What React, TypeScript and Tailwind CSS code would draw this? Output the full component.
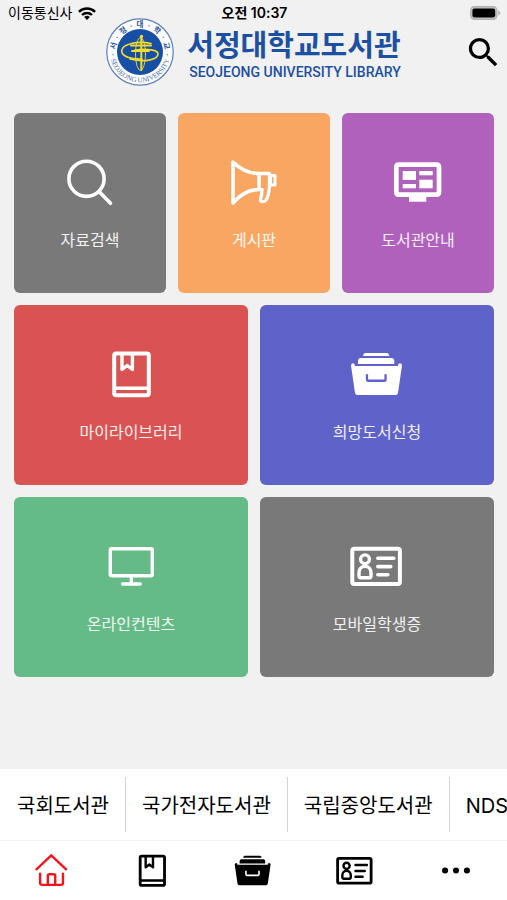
import type { ReactNode } from "react";
import { MdSearch } from "react-icons/md";

type IconProps = { className?: string };

function Icon({ className, children }: IconProps & { children: ReactNode }) {
  return (
    <svg
      viewBox="0 0 54 52"
      fill="none"
      stroke="currentColor"
      strokeWidth="3.6"
      strokeLinecap="round"
      strokeLinejoin="round"
      aria-hidden="true"
      className={className}
    >
      {children}
    </svg>
  );
}

function SearchIcon({ className }: IconProps) {
  return (
    <Icon className={className}>
      <circle cx="23.5" cy="22.8" r="17.6" />
      <path d="M36.5 36 L47.5 47.3" />
    </Icon>
  );
}

function MegaphoneIcon({ className }: IconProps) {
  return (
    <Icon className={className}>
      <path d="M6 6 C13 13 22 17.5 32 17.5 V33.5 C22 33.5 13 39 6 47 Z" />
      <path d="M32 17.5 H42.5 V30 C42 37 41 41 39 44 C37.5 46.5 33 46 33.5 43.5 C34.5 40 35 37 35 33.5 H32" strokeWidth="3.3" />
      <path d="M43.5 19.5 H48 V29 H43.5 Z" strokeWidth="3" />
    </Icon>
  );
}

function GuideIcon({ className }: IconProps) {
  return (
    <Icon className={className}>
      <rect x="5.3" y="8.6" width="42.7" height="30" rx="2" strokeWidth="4.7" />
      <g fill="currentColor" stroke="none">
        <path d="M18 40h17.3v5.7H18z" />
        <path d="M11.7 15H25v9H11.7z" />
        <path d="M11.7 28H25v4.3H11.7z" />
        <path d="M28.3 15h13.4v4.3H28.3z" />
        <path d="M28.3 23.7h13.4v8.6H28.3z" />
      </g>
    </Icon>
  );
}

function BookIcon({ className }: IconProps) {
  return (
    <Icon className={className}>
      <rect x="10.2" y="5.5" width="34.6" height="41.7" rx="2" strokeWidth="4" />
      <path d="M11 40.3 H44" strokeWidth="3.4" />
      <path d="M18 6 V21.5 L23.2 17.5 L28.4 21.5 V6" strokeWidth="3.4" />
    </Icon>
  );
}

function BasketIcon({ className }: IconProps) {
  return (
    <Icon className={className}>
      <g fill="currentColor" stroke="none">
        <path d="M15 5 H37.3 Q39 5.3 39.3 8 H13 Q13.3 5.3 15 5 Z" />
        <path d="M10.3 10 H42 Q44 10.2 44.3 12.5 V16 H8 V12.5 Q8.3 10.2 10.3 10 Z" />
        <path
          fillRule="evenodd"
          d="M1 17.5 Q1.2 15.3 3.2 15.3 Q4.8 15.3 4.9 18 H47.9 Q48 15.3 49.8 15.3 Q52 15.3 52 17.5 L48 45 Q47.6 47 45.7 47 H7.3 Q5.5 47 5 45 Z M15.8 26.3 V31.5 Q15.8 34 18.2 34 H34.2 Q36.7 34 36.7 31.5 V26.3 H34.4 V31.6 H18.1 V26.3 Z"
        />
      </g>
    </Icon>
  );
}

function MonitorIcon({ className }: IconProps) {
  return (
    <Icon className={className}>
      <rect x="6.3" y="8.7" width="42" height="27" rx="1.5" strokeWidth="3.4" />
      <path d="M27.3 36 V44 M18.5 44 H36.3" strokeWidth="3.4" />
    </Icon>
  );
}

function IdCardIcon({ className }: IconProps) {
  return (
    <Icon className={className}>
      <rect x="2.3" y="8.7" width="47.6" height="35.2" rx="2" strokeWidth="4" />
      <circle cx="15" cy="19.3" r="4.4" strokeWidth="3.4" />
      <path
        d="M15 26.3 C11 26.3 9 29.5 9 33 V36 Q9 37.7 10.7 37.7 H19.4 Q21 37.7 21 36 V33 C21 29.5 19 26.3 15 26.3 Z"
        strokeWidth="3.4"
      />
      <path d="M27.8 18.3 H43.8 M27.8 26.6 H40.8 M27.8 34.8 H37.8" strokeWidth="3.6" />
    </Icon>
  );
}

function HomeIcon({ className }: IconProps) {
  return (
    <Icon className={className}>
      <path d="M6.3 24.3 L27.4 4.5 L48.5 24.3" strokeWidth="3.4" />
      <path d="M11.5 30.5 V43.5 Q11.5 46.5 14.5 46.5 H41 Q44 46.5 44 43.5 V30.5" strokeWidth="3.4" />
      <path d="M22.5 46 V33.5 Q22.5 31.3 24.7 31.3 H30.8 Q33 31.3 33 33.5 V46" strokeWidth="3.4" />
    </Icon>
  );
}

function MoreIcon({ className }: IconProps) {
  return (
    <Icon className={className}>
      <g fill="currentColor" stroke="none">
        <circle cx="11.5" cy="26" r="4.3" />
        <circle cx="27" cy="26" r="4.3" />
        <circle cx="42.5" cy="26" r="4.3" />
      </g>
    </Icon>
  );
}

function WifiIcon() {
  return (
    <svg viewBox="0 0 18 13" className="h-[13px] w-[18px]" aria-hidden="true">
      <g fill="none" stroke="#000" strokeWidth="2.4">
        <path d="M0.9 4.8 A11.6 11.6 0 0 1 17.1 4.8" />
        <path d="M4 8 A7.2 7.2 0 0 1 14 8" />
      </g>
      <path d="M9 13 L6.2 10.1 A4 4 0 0 1 11.8 10.1 Z" />
    </svg>
  );
}

function BatteryIcon() {
  return (
    <svg viewBox="0 0 31 14" className="h-[14px] w-[31px]" aria-hidden="true">
      <rect x="0.8" y="0.8" width="26" height="12.4" rx="3.6" fill="#c9c9c9" stroke="#b0b0b0" strokeWidth="1.4" />
      <rect x="2.4" y="2.4" width="22.8" height="9.2" rx="2" />
      <path d="M28.3 4.6 Q30.4 5.4 30.4 7 Q30.4 8.6 28.3 9.4 Z" fill="#b0b0b0" />
    </svg>
  );
}

function Emblem() {
  return (
    <svg viewBox="0 0 68 68" className="size-[68px]" role="img" aria-label="서정대학교">
      <defs>
        <path id="ring-top" d="M9.5 37 A24.7 24.7 0 1 1 58.5 37" />
        <path id="ring-bottom" d="M3.8 34 A30.2 30.2 0 0 0 64.2 34" />
      </defs>
      <circle cx="34" cy="34" r="33.2" fill="#fbfcfe" stroke="#5c7fbd" strokeWidth="1.2" />
      <circle cx="34" cy="34" r="23" fill="#174ea6" />
      <text fill="#2c539b" fontSize="7.5" fontWeight="700" textAnchor="middle" className="whitespace-pre">
        <textPath href="#ring-top" startOffset="50%">
          {"·  서  ·  정  ·  대  ·  학  ·  교  ·"}
        </textPath>
      </text>
      <text fill="#4a6cad" fontSize="7" fontFamily="Liberation Serif" textAnchor="middle">
        <textPath href="#ring-bottom" startOffset="50%">
          SEOJEONG UNIVERSITY
        </textPath>
      </text>
      <g fill="none" stroke="#f3dc2c" strokeLinecap="round">
        <path d="M45 25.5 C32 22.5 15.7 26 15.7 33 C15.7 38.5 25 41.5 36 41" strokeWidth="1.7" />
        <path d="M24 41 C38 44.5 52 42 52 36 C52 32 42 30.5 29 32" strokeWidth="1.7" />
        <ellipse cx="34.5" cy="36" rx="5" ry="16.5" strokeWidth="0.9" />
        <path d="M35.3 20 V52" strokeWidth="2" />
        <path d="M25 27.5 H45 M26 33 H43" strokeWidth="2" />
      </g>
      <circle cx="35.5" cy="18.5" r="1.7" fill="#f3dc2c" />
    </svg>
  );
}

const topMenu = [
  { label: "자료검색", icon: SearchIcon, color: "bg-[#797979]" },
  { label: "게시판", icon: MegaphoneIcon, color: "bg-[#f9a663]" },
  { label: "도서관안내", icon: GuideIcon, color: "bg-[#af61bb]" },
];

const mainMenu = [
  { label: "마이라이브러리", icon: BookIcon, color: "bg-[#da5353]" },
  { label: "희망도서신청", icon: BasketIcon, color: "bg-[#5f62c8]" },
  { label: "온라인컨텐츠", icon: MonitorIcon, color: "bg-[#65bb87]" },
  { label: "모바일학생증", icon: IdCardIcon, color: "bg-[#797979]" },
];

const libraryLinks = ["국회도서관", "국가전자도서관", "국립중앙도서관", "NDS"];

const tabs = [
  { label: "홈", icon: HomeIcon, color: "text-[#f5141b]" },
  { label: "마이라이브러리", icon: BookIcon, color: "text-black" },
  { label: "희망도서신청", icon: BasketIcon, color: "text-black" },
  { label: "모바일학생증", icon: IdCardIcon, color: "text-black" },
  { label: "더보기", icon: MoreIcon, color: "text-black" },
];

function MenuCard({ item }: { item: (typeof topMenu)[number] }) {
  return (
    <button
      type="button"
      className={`flex h-[180px] flex-col items-center justify-center gap-5 rounded-md pt-0.5 text-white ${item.color}`}
    >
      <item.icon className="h-[52px] w-[54px]" />
      <span className="text-base leading-6 text-white/90">{item.label}</span>
    </button>
  );
}

export default function App() {
  return (
    <div className="flex min-h-screen flex-col bg-[#f1f1f1] font-['Inter','Noto_Sans_CJK_KR',sans-serif] text-black">
      <div className="grid h-[26px] grid-cols-3 items-center pr-1.5 pl-2 text-[14px] leading-5">
        <div className="flex items-center gap-1.5 whitespace-nowrap">
          <span>이동통신사</span>
          <WifiIcon />
        </div>
        <div className="text-center font-semibold">오전 10:37</div>
        <div className="justify-self-end">
          <BatteryIcon />
        </div>
      </div>

      <header className="-mt-2 grid grid-cols-[1fr_auto_1fr] items-center px-1">
        <a href="#" className="col-start-2 flex items-center gap-[13px] whitespace-nowrap text-[#1c50a2]">
          <Emblem />
          <div className="flex flex-col pt-2">
            <span className="text-[29px] leading-8 font-bold">서정대학교도서관</span>
            <span className="pl-0.5 font-['Roboto',sans-serif] text-[14px] leading-5 font-medium">
              SEOJEONG UNIVERSITY LIBRARY
            </span>
          </div>
        </a>
        <button type="button" aria-label="검색" className="justify-self-end">
          <MdSearch size={39} />
        </button>
      </header>

      <main className="flex flex-1 flex-col gap-3 pt-[27px] pr-[13px] pb-6 pl-3.5">
        <div className="grid grid-cols-3 gap-3">
          {topMenu.map((item) => (
            <MenuCard key={item.label} item={item} />
          ))}
        </div>
        <div className="grid grid-cols-2 gap-3">
          {mainMenu.map((item) => (
            <MenuCard key={item.label} item={item} />
          ))}
        </div>
      </main>

      <footer className="bg-white">
        <div className="flex overflow-x-auto border-b border-gray-100 py-2 pl-px [scrollbar-width:none]">
          {libraryLinks.map((name) => (
            <a
              key={name}
              href="#"
              className="flex h-[55px] shrink-0 items-center border-r border-gray-300 px-4 pt-0.5 text-[20px] leading-6 last:border-r-0 last:pr-0"
            >
              {name}
            </a>
          ))}
        </div>
        <nav className="grid h-[59px] grid-cols-5">
          {tabs.map((tab) => (
            <button
              key={tab.label}
              type="button"
              aria-label={tab.label}
              className={`flex items-center justify-center ${tab.color}`}
            >
              <tab.icon className="h-[37px] w-[38px]" />
            </button>
          ))}
        </nav>
      </footer>
    </div>
  );
}
